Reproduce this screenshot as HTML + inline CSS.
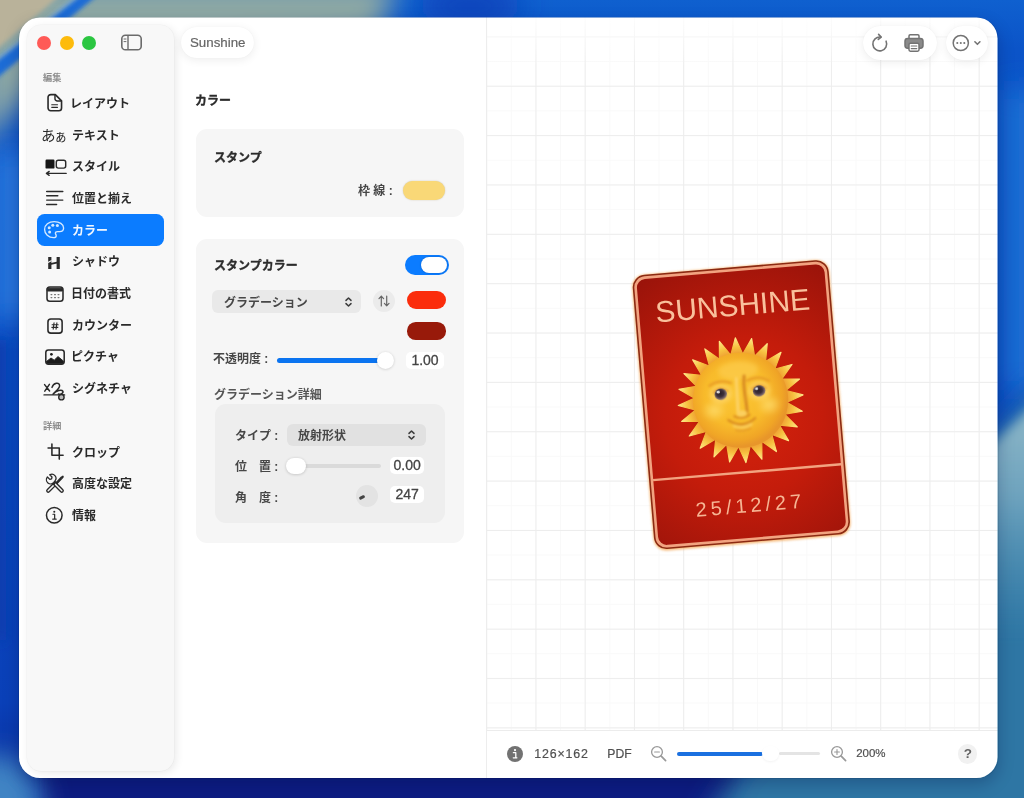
<!DOCTYPE html>
<html lang="ja">
<head>
<meta charset="utf-8">
<title>Sunshine</title>
<style>
*{box-sizing:border-box;margin:0;padding:0}
html,body{width:1024px;height:798px;overflow:hidden;background:#0a4fc4;font-family:"Liberation Sans",sans-serif;color:#2b2b2b}
.abs,.t,svg.i{position:absolute}
svg.t{overflow:visible}
svg.t text{font-family:"Liberation Sans","Noto Sans CJK JP",sans-serif;font-weight:bold}
#wall{position:absolute;left:0;top:0;width:1024px;height:798px}
#winshadow{position:absolute;left:19px;top:17.5px;width:978.5px;height:760.5px;border-radius:21px;box-shadow:0 6px 16px rgba(0,10,60,.26),0 0 0 .5px rgba(0,0,0,.16)}
#win{position:absolute;left:0;top:0;width:1024px;height:798px;clip-path:inset(17.5px 26.5px 20px 19px round 21px);background:#fff;filter:blur(.7px)}
#sidebar{position:absolute;left:26.5px;top:25px;width:147.5px;height:745.5px;border-radius:14px;background:#f8f8f8;box-shadow:0 0 0 .5px rgba(0,0,0,.035),2px 2px 9px rgba(0,0,0,.085)}
.sel{position:absolute;left:36.8px;top:214.2px;width:127.6px;height:31.4px;border-radius:7.5px;background:#0b7cff}
.tl{position:absolute;top:36px;width:14px;height:14px;border-radius:50%}
.lat{position:absolute;white-space:nowrap;line-height:1}
.card{position:absolute;background:#f6f6f6;border-radius:11px}
.pill{position:absolute;background:#fff;border-radius:17px;box-shadow:0 2px 10px rgba(0,0,0,.075),0 0 1px rgba(0,0,0,.06)}
.num{position:absolute;background:#fff;border-radius:5px;font-size:14px;line-height:17px;text-align:center;color:#444;-webkit-text-stroke:.3px #444}
</style>
</head>
<body>
<!-- ===== wallpaper ===== -->
<svg id="wall" viewBox="0 0 1024 798" preserveAspectRatio="none">
<defs>
<filter id="b6" filterUnits="userSpaceOnUse" x="-120" y="-120" width="1264" height="1038"><feGaussianBlur stdDeviation="6"/></filter>
<filter id="b3" filterUnits="userSpaceOnUse" x="-120" y="-120" width="1264" height="1038"><feGaussianBlur stdDeviation="2.2"/></filter>
<filter id="b14" filterUnits="userSpaceOnUse" x="-120" y="-120" width="1264" height="1038"><feGaussianBlur stdDeviation="14"/></filter>
<linearGradient id="wl" x1="0" y1="0" x2="0" y2="1">
<stop offset="0" stop-color="#0f60cf"/><stop offset=".06" stop-color="#0b54c8"/><stop offset=".45" stop-color="#0a4cc2"/><stop offset=".88" stop-color="#0a40b8"/><stop offset="1" stop-color="#0a2a98"/>
</linearGradient>
<linearGradient id="tg" gradientUnits="userSpaceOnUse" x1="0" y1="418" x2="0" y2="640"><stop offset="0" stop-color="#8fb8c8" stop-opacity=".95"/><stop offset=".35" stop-color="#7eaec4" stop-opacity=".8"/><stop offset="1" stop-color="#5a9aba" stop-opacity="0"/></linearGradient>
</defs>
<rect width="1024" height="798" fill="url(#wl)"/>
<ellipse cx="470" cy="6" rx="52" ry="22" fill="#0a44bc" filter="url(#b14)"/>
<!-- right side lighter band -->
<rect x="1004" y="90" width="40" height="300" fill="#1c6fd4" filter="url(#b14)"/>
<!-- left side -->
<rect x="-6" y="150" width="34" height="170" fill="#2b7be0" filter="url(#b14)"/>
<rect x="-14" y="340" width="20" height="300" fill="#0a3cae" filter="url(#b6)"/>
<!-- bottom navy -->
<rect x="40" y="768" width="700" height="50" fill="#0a1d82" filter="url(#b6)"/>
<ellipse cx="-4" cy="806" rx="46" ry="52" fill="#3f84c4" filter="url(#b14)"/>
<!-- bottom-right teal -->
<path d="M700 830 L752 750 L955 750 L955 476 L1050 378 L1060 830Z" fill="#2f76a4" filter="url(#b14)"/>
<path d="M975 461 L1050 389 L1050 660 L975 660Z" fill="url(#tg)" filter="url(#b6)"/>
<!-- top-left beige / teal -->
<path d="M-20 -20 L398 -20 L378 36 L60 60 L-20 150Z" fill="#8da8a4" filter="url(#b14)"/>
<path d="M-20 -20 L78 -20 L-20 64Z" fill="#b9b29a" filter="url(#b3)"/>
<path d="M94 -16 L111 -16 L-20 92 L-20 73Z" fill="#1b6cd6" filter="url(#b3)"/><path d="M93 -16 L-20 73" stroke="#a9cdea" stroke-width="1.6" opacity=".8" filter="url(#b3)"/>
</svg>

<div id="winshadow"></div>
<div id="win">
  <div id="sidebar"></div>
  <div class="sel"></div>
  <div class="tl" style="left:37px;background:#ff5a57"></div>
  <div class="tl" style="left:59.5px;background:#fdbb0c"></div>
  <div class="tl" style="left:82px;background:#2bc641"></div>
  <!-- sidebar toggle icon -->
  <svg class="i" style="left:120px;top:33px" width="23" height="19" viewBox="0 0 23 19" fill="none" stroke="#6b6b6b" stroke-width="1.6"><rect x="1.8" y="2.2" width="19.4" height="14.6" rx="3.6"/><path d="M8 2.4V16.6" stroke-width="1.4"/><path d="M4 6h2M4 8.6h2" stroke-width="1" stroke-linecap="round"/></svg>
  <!-- sidebar labels -->
  <svg class="t" style="left:42.7px;top:72.9px;fill:#8e8e8e" width="18.4" height="9.2" viewBox="0 -8.1 18.4 9.2" role="img" aria-label="編集"><text x="0" y="0" font-size="9.2">編集</text></svg>
  <svg class="t" style="left:70.2px;top:97px;fill:#2a2a2a" width="60" height="12" viewBox="0 -10.56 60 12" role="img" aria-label="レイアウト"><text x="0" y="0" font-size="12">レイアウト</text></svg>
  <svg class="t" style="left:71.5px;top:128.7px;fill:#2a2a2a" width="48" height="12" viewBox="0 -10.56 48 12" role="img" aria-label="テキスト"><text x="0" y="0" font-size="12">テキスト</text></svg>
  <svg class="t" style="left:71.6px;top:160.3px;fill:#2a2a2a" width="48" height="12" viewBox="0 -10.56 48 12" role="img" aria-label="スタイル"><text x="0" y="0" font-size="12">スタイル</text></svg>
  <svg class="t" style="left:72.4px;top:192px;fill:#2a2a2a" width="60" height="12" viewBox="0 -10.56 60 12" role="img" aria-label="位置と揃え"><text x="0" y="0" font-size="12">位置と揃え</text></svg>
  <svg class="t" style="left:71.5px;top:223.9px;fill:#f0f7ff" width="36" height="12" viewBox="0 -10.56 36 12" role="img" aria-label="カラー"><text x="0" y="0" font-size="12">カラー</text></svg>
  <svg class="t" style="left:71.5px;top:255.3px;fill:#2a2a2a" width="48" height="12" viewBox="0 -10.56 48 12" role="img" aria-label="シャドウ"><text x="0" y="0" font-size="12">シャドウ</text></svg>
  <svg class="t" style="left:70.7px;top:287px;fill:#2a2a2a" width="60" height="12" viewBox="0 -10.56 60 12" role="img" aria-label="日付の書式"><text x="0" y="0" font-size="12">日付の書式</text></svg>
  <svg class="t" style="left:71.5px;top:318.7px;fill:#2a2a2a" width="60" height="12" viewBox="0 -10.56 60 12" role="img" aria-label="カウンター"><text x="0" y="0" font-size="12">カウンター</text></svg>
  <svg class="t" style="left:70.6px;top:350.3px;fill:#2a2a2a" width="48" height="12" viewBox="0 -10.56 48 12" role="img" aria-label="ピクチャ"><text x="0" y="0" font-size="12">ピクチャ</text></svg>
  <svg class="t" style="left:71.5px;top:382px;fill:#2a2a2a" width="60" height="12" viewBox="0 -10.56 60 12" role="img" aria-label="シグネチャ"><text x="0" y="0" font-size="12">シグネチャ</text></svg>
  <svg class="t" style="left:42.5px;top:420.9px;fill:#8e8e8e" width="18.4" height="9.2" viewBox="0 -8.1 18.4 9.2" role="img" aria-label="詳細"><text x="0" y="0" font-size="9.2">詳細</text></svg>
  <svg class="t" style="left:71.7px;top:445.5px;fill:#2a2a2a" width="48" height="12" viewBox="0 -10.56 48 12" role="img" aria-label="クロップ"><text x="0" y="0" font-size="12">クロップ</text></svg>
  <svg class="t" style="left:71.8px;top:477.3px;fill:#2a2a2a" width="60" height="12" viewBox="0 -10.56 60 12" role="img" aria-label="高度な設定"><text x="0" y="0" font-size="12">高度な設定</text></svg>
  <svg class="t" style="left:72.3px;top:509px;fill:#2a2a2a" width="24" height="12" viewBox="0 -10.56 24 12" role="img" aria-label="情報"><text x="0" y="0" font-size="12">情報</text></svg>

  <!-- sidebar icons -->
  <svg class="i" style="left:44.20px;top:91.80px" width="21.60" height="21.60" viewBox="0 0 24 24" fill="none" stroke="#2a2a2a" stroke-width="1.55" stroke-linecap="round" stroke-linejoin="round"><path d="M7.3 2.9H12.6L19.5 9.8V17.8A3 3 0 0 1 16.5 20.8H7.5A3 3 0 0 1 4.5 17.8V5.9A3 3 0 0 1 7.5 2.9Z" stroke-width="1.8"/><path d="M12.2 3.2V7.4A2.6 2.6 0 0 0 14.8 10H19.2" stroke-width="1.6"/><path d="M8.6 14.2H15M8.6 17H15" stroke-width="1.3"/></svg>
  <svg class="t" style="left:41.4px;top:127.5px;fill:#2a2a2a" width="14.6" height="14.6" viewBox="0 -12.85 14.6 14.6" role="img" aria-label="あ"><text x="0" y="0" font-size="14.6" style="font-weight:normal">あ</text></svg>
  <svg class="t" style="left:54.1px;top:128.9px;fill:#2a2a2a" width="13.4" height="13.4" viewBox="0 -11.79 13.4 13.4" role="img" aria-label="ぁ"><text x="0" y="0" font-size="13.4" style="font-weight:normal">ぁ</text></svg>
  <svg class="i" style="left:43.5px;top:154.6px" width="24" height="24" viewBox="0 0 24 24" fill="none" stroke="#2a2a2a" stroke-width="1.55" stroke-linecap="round" stroke-linejoin="round"><rect x="1.5" y="4.6" width="9" height="9" rx="1.2" fill="#161616" stroke="none"/><rect x="12.3" y="5.3" width="9.4" height="7.8" rx="2" stroke-width="1.45"/><path d="M2.4 18.4H22.2M5.2 16.4L2.4 18.4L5.2 20.4" stroke-width="1.3"/></svg>
  <svg class="i" style="left:43px;top:186.3px" width="24" height="24" viewBox="0 0 24 24" fill="none" stroke="#2a2a2a" stroke-width="1.55" stroke-linecap="round" stroke-linejoin="round"><path d="M3.7 5.5H19.8M3.7 9.8H14.8M3.7 14.1H19.8M3.7 18.4H13.6" stroke-width="1.45"/></svg>
  <svg class="i" style="left:41.7px;top:217.8px" width="24" height="24" viewBox="0 0 24 24" fill="none" stroke="#2a2a2a" stroke-width="1.55" stroke-linecap="round" stroke-linejoin="round"><path d="M12.2 3.6C6.8 3.6 2.6 7 2.6 11.4C2.6 16 6.6 19.6 11.6 19.6C13.4 19.6 14.2 18.7 14.2 17.7C14.2 16.6 13.4 16.2 13.4 15.2C13.4 14.2 14.3 13.6 15.6 13.6H17.6C20 13.6 21.6 12.2 21.6 10C21.6 6.2 17.4 3.6 12.2 3.6Z" stroke="#d4e9ff" stroke-width="1.35"/><g fill="#d4e9ff" stroke="none"><circle cx="7.2" cy="9.8" r="1.5"/><circle cx="10.8" cy="7.2" r="1.5"/><circle cx="15.4" cy="7.6" r="1.5"/><circle cx="7.6" cy="14" r="1.5"/></g></svg>
  <svg class="i" style="left:42.30px;top:251.00px" width="24.00" height="24.00" viewBox="0 0 24 24" fill="none" stroke="#2a2a2a" stroke-width="1.55" stroke-linecap="round" stroke-linejoin="round"><path d="M7.8 6V18M16.2 6V18" stroke-width="3.2" stroke-linecap="butt"/><path d="M8 13.2L16 11.4" stroke-width="1.7" stroke-linecap="butt"/><path d="M6 11.4L9.6 9.6" stroke="#f8f8f8" stroke-width="1.1" stroke-linecap="butt"/></svg>
  <svg class="i" style="left:42.6px;top:281.6px" width="24" height="24" viewBox="0 0 24 24" fill="none" stroke="#2a2a2a" stroke-width="1.55" stroke-linecap="round" stroke-linejoin="round"><rect x="4" y="5" width="16" height="14.2" rx="2.8"/><path d="M4.6 6.2H19.4V9H4.6Z" fill="#2a2a2a" stroke-width="1"/><g stroke="#777" stroke-width="1.1"><path d="M8 12.6H8.9M11.5 12.6H12.5M15 12.6H16M8 15.6H8.9M11.5 15.6H12.5M15 15.6H16"/></g></svg>
  <svg class="i" style="left:43.66px;top:314.76px" width="22.08" height="22.08" viewBox="0 0 24 24" fill="none" stroke="#2a2a2a" stroke-width="1.55" stroke-linecap="round" stroke-linejoin="round"><rect x="4.3" y="4.3" width="15.4" height="15.4" rx="3.2" stroke-width="1.7"/><path d="M10.9 8.6L10 15.4M14 8.6L13.1 15.4M8.8 10.6H15.4M8.5 13.4H15.1" stroke-width="1.2"/></svg>
  <svg class="i" style="left:42.5px;top:344.8px" width="24" height="24" viewBox="0 0 24 24" fill="none" stroke="#2a2a2a" stroke-width="1.55" stroke-linecap="round" stroke-linejoin="round"><rect x="2.8" y="4.9" width="18.4" height="14.2" rx="2.6"/><path d="M3.4 16.6L8 13L11.2 15.2L15 11.6L20.6 16.2V17A1.6 1.6 0 0 1 19 18.6H5A1.6 1.6 0 0 1 3.4 17Z" fill="#1c1c1c" stroke-width="1"/><circle cx="8.4" cy="9.3" r="1.35" fill="#1c1c1c" stroke="none"/></svg>
  <svg class="i" style="left:43px;top:377.6px" width="24" height="24" viewBox="0 0 24 24" fill="none" stroke="#2a2a2a" stroke-width="1.55" stroke-linecap="round" stroke-linejoin="round"><path d="M1.6 6.6L6.6 13M6.4 6.4L1.8 13.2" stroke-width="1.5"/><path d="M9 9.4C10.4 4.6 16.6 3.6 16.6 7.8C16.6 11 12 13.4 10 16.2C13.4 12.6 18.6 11 19.8 13.2C20.8 15.2 17.4 16.6 15.4 16" stroke-width="1.5"/><path d="M1 16.9H21.6" stroke-width="1.4"/><circle cx="18.4" cy="19.2" r="2.7" stroke-width="1.4" fill="#bdbdbd"/></svg>
  <svg class="i" style="left:45.70px;top:442.40px" width="19.20" height="19.20" viewBox="0 0 24 24" fill="none" stroke="#2a2a2a" stroke-width="1.55" stroke-linecap="round" stroke-linejoin="round"><path d="M7.4 2.6V16.6H21.4M2.6 7.4H16.6V21.4" stroke-width="1.95"/></svg>
  <svg class="i" style="left:43.00px;top:471.80px" width="24.00" height="24.00" viewBox="0 0 24 24" fill="none" stroke="#2a2a2a" stroke-width="1.55" stroke-linecap="round" stroke-linejoin="round"><g><path d="M5.2 18.8L12.4 11.6" stroke-width="4.2"/><path d="M5.2 18.8L12.4 11.6" stroke="#f7f7f7" stroke-width="1.5"/><path d="M13 11L18.2 5.2L19.8 4.2L20.2 4.8L19 6.4L13.8 11.8" stroke-width="1.3"/><path d="M18.8 18.8L11.4 11.2" stroke-width="4.2"/><path d="M18.8 18.8L12.6 12.4" stroke="#f7f7f7" stroke-width="1.5"/><path d="M10.8 10.4A4.1 4.1 0 0 1 4.4 5L6.8 7.4L8.6 6.8L9 5L6.7 2.8A4.1 4.1 0 0 1 12 8.9Z" stroke-width="1.3" fill="#f7f7f7"/></g></svg>
  <svg class="i" style="left:43.02px;top:503.72px" width="22.56" height="22.56" viewBox="0 0 24 24" fill="none" stroke="#2a2a2a" stroke-width="1.55" stroke-linecap="round" stroke-linejoin="round"><circle cx="12" cy="12" r="8.3" stroke-width="1.6"/><circle cx="12" cy="8.2" r="1.1" fill="#2a2a2a" stroke="none"/><path d="M10.6 10.9H12.4V16M10.4 16.1H14" stroke-width="1.3"/></svg>

  <!-- title pill -->
  <div class="pill" style="left:180.5px;top:27px;width:73px;height:31px;border-radius:16px"></div>
  <div class="lat" style="left:190px;top:36.4px;font-size:13.3px;color:#666;-webkit-text-stroke:.2px #666">Sunshine</div>

  <!-- ===== inspector ===== -->
  <svg class="t" style="left:194.8px;top:93.8px;fill:#2c2c2c;stroke:#2c2c2c;stroke-width:0.35px;stroke-linejoin:round" width="36" height="12" viewBox="0 -10.56 36 12" role="img" aria-label="カラー"><text x="0" y="0" font-size="12">カラー</text></svg>
  <div class="card" style="left:196px;top:129px;width:267.8px;height:88px"></div>
  <svg class="t" style="left:213.9px;top:151.2px;fill:#2c2c2c;stroke:#2c2c2c;stroke-width:0.35px;stroke-linejoin:round" width="48" height="12" viewBox="0 -10.56 48 12" role="img" aria-label="スタンプ"><text x="0" y="0" font-size="12">スタンプ</text></svg>
  <svg class="t" style="left:357.5px;top:183.6px;fill:#474747" width="36.3" height="12" viewBox="0 -10.56 36.3 12" role="img" aria-label="枠 線 :"><text x="0" y="0" font-size="12">枠 線 :</text></svg>
  <div class="abs" style="left:402.5px;top:180.5px;width:42.5px;height:19px;border-radius:9.5px;background:#f9d877;box-shadow:0 0 1.5px rgba(120,90,0,.35)"></div>

  <div class="card" style="left:196px;top:238.5px;width:267.8px;height:304.2px"></div>
  <svg class="t" style="left:213.9px;top:259px;fill:#2c2c2c;stroke:#2c2c2c;stroke-width:0.35px;stroke-linejoin:round" width="84" height="12" viewBox="0 -10.56 84 12" role="img" aria-label="スタンプカラー"><text x="0" y="0" font-size="12">スタンプカラー</text></svg>
  <!-- toggle -->
  <div class="abs" style="left:404.5px;top:254.5px;width:44px;height:20.5px;border-radius:10.5px;background:#0b7cff"></div>
  <div class="abs" style="left:420.5px;top:256.8px;width:26px;height:16px;border-radius:8px;background:#fff;box-shadow:0 0 2px rgba(0,0,0,.25)"></div>
  <!-- popup 1 -->
  <div class="abs" style="left:211.7px;top:290px;width:149.6px;height:23px;border-radius:6px;background:#e9e9e9"></div>
  <svg class="t" style="left:223.9px;top:295.6px;fill:#474747" width="84" height="12" viewBox="0 -10.56 84 12" role="img" aria-label="グラデーション"><text x="0" y="0" font-size="12">グラデーション</text></svg>
  <svg class="i" style="left:343.5px;top:295.5px" width="9" height="12" viewBox="0 0 9 12" fill="none" stroke="#3c3c3c" stroke-width="1.5" stroke-linecap="round" stroke-linejoin="round"><path d="M2 4.4L4.5 2L7 4.4M2 7.6L4.5 10L7 7.6"/></svg>
  <!-- swap button -->
  <div class="abs" style="left:373.3px;top:289.7px;width:22px;height:22px;border-radius:11px;background:#ebebeb"></div>
  <svg class="i" style="left:377.3px;top:293.7px" width="14" height="14" viewBox="0 0 14 14" fill="none" stroke="#666" stroke-width="1.2" stroke-linecap="round" stroke-linejoin="round"><path d="M4.3 12V2.2M2 4.6L4.3 2.2L6.6 4.6M9.7 2V11.8M7.4 9.4L9.7 11.8L12 9.4"/></svg>
  <div class="abs" style="left:406.7px;top:291px;width:39px;height:18.2px;border-radius:9.1px;background:#fb2d0c"></div>
  <div class="abs" style="left:406.7px;top:322.2px;width:39px;height:17.4px;border-radius:8.7px;background:#981a0a"></div>
  <svg class="t" style="left:213.4px;top:352.4px;fill:#474747" width="56.1" height="12" viewBox="0 -10.56 56.1 12" role="img" aria-label="不透明度 :"><text x="0" y="0" font-size="12">不透明度 :</text></svg>
  <!-- slider 1 -->
  <div class="abs" style="left:276.5px;top:358px;width:104px;height:5px;border-radius:2.5px;background:#0b74f0"></div>
  <div class="abs" style="left:376.8px;top:351.8px;width:17.6px;height:17.4px;border-radius:8.7px;background:#fff;box-shadow:0 .5px 3px rgba(0,0,0,.18)"></div>
  <div class="num" style="left:406px;top:352px;width:38px;height:17px">1.00</div>
  <svg class="t" style="left:214.3px;top:388px;fill:#555555" width="108" height="12" viewBox="0 -10.56 108 12" role="img" aria-label="グラデーション詳細"><text x="0" y="0" font-size="12">グラデーション詳細</text></svg>

  <div class="abs" style="left:214.8px;top:403.6px;width:230px;height:119.8px;border-radius:11px;background:#eeeeee"></div>
  <svg class="t" style="left:235.3px;top:429.4px;fill:#474747" width="44.1" height="12" viewBox="0 -10.56 44.1 12" role="img" aria-label="タイプ :"><text x="0" y="0" font-size="12">タイプ :</text></svg>
  <div class="abs" style="left:287.4px;top:424px;width:138.4px;height:22px;border-radius:6px;background:#e1e1e1"></div>
  <svg class="t" style="left:298.4px;top:429.2px;fill:#474747" width="48" height="12" viewBox="0 -10.56 48 12" role="img" aria-label="放射形状"><text x="0" y="0" font-size="12">放射形状</text></svg>
  <svg class="i" style="left:407px;top:429.2px" width="9" height="12" viewBox="0 0 9 12" fill="none" stroke="#3c3c3c" stroke-width="1.5" stroke-linecap="round" stroke-linejoin="round"><path d="M2 4.4L4.5 2L7 4.4M2 7.6L4.5 10L7 7.6"/></svg>
  <svg class="t" style="left:235.1px;top:460.3px;fill:#474747" width="44.1" height="12" viewBox="0 -10.56 44.1 12" role="img" aria-label="位　置 :"><text x="0" y="0" font-size="12">位　置 :</text></svg>
  <div class="abs" style="left:300px;top:463.7px;width:81.3px;height:4px;border-radius:2px;background:#dadada"></div>
  <div class="abs" style="left:285.6px;top:457.5px;width:20.6px;height:16.4px;border-radius:8.2px;background:#fff;box-shadow:0 .5px 3px rgba(0,0,0,.2)"></div>
  <div class="num" style="left:390px;top:457px;width:34.4px;height:17.2px">0.00</div>
  <svg class="t" style="left:234.9px;top:490.6px;fill:#474747" width="44.1" height="12" viewBox="0 -10.56 44.1 12" role="img" aria-label="角　度 :"><text x="0" y="0" font-size="12">角　度 :</text></svg>
  <div class="abs" style="left:356.3px;top:484.8px;width:22px;height:22px;border-radius:11px;background:#e3e3e3"></div>
  <div class="abs" style="left:358.8px;top:496.3px;width:5.6px;height:2.8px;border-radius:1.4px;background:#444;transform:rotate(-25deg)"></div>
  <div class="num" style="left:390px;top:486px;width:34.4px;height:17.2px">247</div>

  <!-- ===== canvas ===== -->
  <div id="canvas" class="abs" style="left:486px;top:17px;width:512px;height:713.5px;border-bottom:1px solid #ececec;
    background-color:#fff;
    background-image:linear-gradient(to bottom,rgba(255,255,255,.85) 0,rgba(255,255,255,.5) 22px,rgba(255,255,255,0) 50px),linear-gradient(to right,#ededed 1px,transparent 1px),linear-gradient(to bottom,#ededed 1px,transparent 1px),linear-gradient(to right,#f9f9f9 1px,transparent 1px),linear-gradient(to bottom,#f9f9f9 1px,transparent 1px);
    background-size:100% 100%,49.25px 49.36px,49.25px 49.36px,24.625px 24.68px,24.625px 24.68px;
    background-position:0 0,.2px 19.4px,.2px 19.4px,.2px 19.4px,.2px 19.4px"></div>

  <div class="abs" style="left:485.6px;top:17px;width:1px;height:761px;background:#ededed"></div>
  <!-- toolbar right -->
  <div class="pill" style="left:863px;top:26px;width:74px;height:34px"></div>
  <div class="pill" style="left:946px;top:26px;width:42px;height:34px"></div>
  <svg class="i" style="left:869px;top:32px" width="22" height="22" viewBox="0 0 22 22" fill="none" stroke="#737373" stroke-width="1.6" stroke-linecap="round" stroke-linejoin="round"><path d="M11.6 5.1A6.9 6.9 0 1 0 17.1 9.2"/><path d="M9.6 2.4L12.2 5.1L9.3 7.4"/></svg>
  <svg class="i" style="left:903px;top:32px" width="22" height="22" viewBox="0 0 22 22" fill="none" stroke="#737373" stroke-width="1.5" stroke-linejoin="round"><rect x="6" y="2.8" width="10" height="4.4" rx="1.2"/><rect x="2" y="6.6" width="18" height="9.6" rx="2.6" fill="#8a8a8a"/><rect x="6" y="11.2" width="10" height="8" rx="1.4" fill="#fff"/><path d="M8.2 14h5.6M8.2 16.6h5.6" stroke-width="1.1" stroke-linecap="round"/></svg>
  <svg class="i" style="left:950px;top:32px" width="36" height="22" viewBox="0 0 36 22" fill="none" stroke="#737373" stroke-width="1.5" stroke-linecap="round" stroke-linejoin="round"><circle cx="10.8" cy="11" r="7.6"/><g fill="#737373" stroke="none"><circle cx="7.3" cy="11" r="1.05"/><circle cx="10.8" cy="11" r="1.05"/><circle cx="14.3" cy="11" r="1.05"/></g><path d="M24.9 9.8L27.4 12.3L29.9 9.8" stroke-width="1.6"/></svg>

  <!-- bottom bar -->
  <svg class="i" style="left:506px;top:744.7px" width="18" height="18" viewBox="0 0 18 18"><circle cx="9" cy="9" r="8" fill="#727272"/><circle cx="9" cy="5.1" r="1.15" fill="#fff"/><path d="M7.4 7.7h2.4v5M7.3 12.8h3.6" stroke="#fff" stroke-width="1.3" fill="none" stroke-linecap="round" stroke-linejoin="round"/></svg>
  <div class="lat" style="left:534.3px;top:747.8px;font-size:12.4px;letter-spacing:.85px;color:#505050;-webkit-text-stroke:.2px #505050">126×162</div>
  <div class="lat" style="left:607.3px;top:747.8px;font-size:12.2px;color:#505050;-webkit-text-stroke:.2px #505050">PDF</div>
  <svg class="i" style="left:648.5px;top:744px" width="20" height="20" viewBox="0 0 20 20" fill="none" stroke="#999" stroke-width="1.3" stroke-linecap="round"><circle cx="8" cy="8" r="5.4"/><path d="M12.2 12.2L16.6 16.6" stroke-width="1.7"/><path d="M5.6 8h4.8" stroke-width="1.1"/></svg>
  <div class="abs" style="left:676.5px;top:751.5px;width:86px;height:4px;border-radius:2px;background:#1a70e0"></div>
  <div class="abs" style="left:778.5px;top:752px;width:41.5px;height:3px;border-radius:1.5px;background:#e4e4e4"></div>
  <div class="abs" style="left:761.5px;top:746px;width:17.5px;height:15px;border-radius:7.5px;background:#fff;box-shadow:0 1px 2.5px rgba(0,0,0,.05)"></div>
  <svg class="i" style="left:828.9px;top:744px" width="20" height="20" viewBox="0 0 20 20" fill="none" stroke="#999" stroke-width="1.3" stroke-linecap="round"><circle cx="8" cy="8" r="5.4"/><path d="M12.2 12.2L16.6 16.6" stroke-width="1.7"/><path d="M5.6 8h4.8M8 5.6v4.8" stroke-width="1.1"/></svg>
  <div class="lat" style="left:856.2px;top:748.3px;font-size:11.5px;color:#505050;-webkit-text-stroke:.2px #505050">200%</div>
  <div class="abs" style="left:958px;top:744.2px;width:19.4px;height:19.4px;border-radius:10px;background:#f1f1f1"></div>
  <div class="lat" style="left:963.7px;top:747px;font-size:13.5px;font-weight:bold;color:#626262">?</div>

  <!-- ===== stamp ===== -->
  <svg id="stamp" class="i" style="left:643.45px;top:267.05px;transform:rotate(-4.85deg);overflow:visible" width="196.7" height="275.3" viewBox="0 0 196.7 275.3" role="img" aria-label="SUNSHINE 25/12/27">
<defs>
<radialGradient id="sg" gradientUnits="userSpaceOnUse" cx="100" cy="150" r="175"><stop offset="0" stop-color="#d6230d"/><stop offset=".45" stop-color="#c41c0b"/><stop offset="1" stop-color="#98130a"/></radialGradient>
<radialGradient id="rg" gradientUnits="userSpaceOnUse" cx="98.0" cy="133.2" r="63.2"><stop offset=".72" stop-color="#ee9a30"/><stop offset=".84" stop-color="#f7c140"/><stop offset="1" stop-color="#ffeb8c"/></radialGradient>
<radialGradient id="dg" gradientUnits="userSpaceOnUse" cx="94.0" cy="127.19999999999999" r="52"><stop offset="0" stop-color="#fbc634"/><stop offset=".6" stop-color="#f8bb2b"/><stop offset=".88" stop-color="#f0a526"/><stop offset="1" stop-color="#e8962a"/></radialGradient>
<radialGradient id="ck"><stop offset="0" stop-color="#fedc6c" stop-opacity=".85"/><stop offset="1" stop-color="#fedc6c" stop-opacity="0"/></radialGradient>
<radialGradient id="eye" cx=".45" cy=".42" r=".6"><stop offset="0" stop-color="#2a2029"/><stop offset=".5" stop-color="#3e303a"/><stop offset=".8" stop-color="#75626a"/><stop offset="1" stop-color="#c9a468"/></radialGradient>
<filter id="sb1" x="-30%" y="-30%" width="160%" height="160%"><feGaussianBlur stdDeviation="1.1"/></filter>
<filter id="sb2" x="-30%" y="-30%" width="160%" height="160%"><feGaussianBlur stdDeviation="2.2"/></filter>
<filter id="sb0" x="-30%" y="-30%" width="160%" height="160%"><feGaussianBlur stdDeviation=".55"/></filter>
</defs>
<rect x="-.6" y="-.2" width="197.89999999999998" height="276.90000000000003" rx="13" fill="#f3a24e" opacity=".75" filter="url(#sb1)"/>
<rect x="0" y="0" width="196.7" height="275.3" rx="12.5" fill="#8c2a12"/>
<rect x="1.6" y="1.6" width="193.5" height="272.1" rx="11" fill="#f2a380"/>
<rect x="4.2" y="4.2" width="188.29999999999998" height="266.90000000000003" rx="8.6" fill="url(#sg)"/>
<path d="M4 205.4H192.7" stroke="#f2a380" stroke-width="2.5"/>
<text x="98" y="48.5" text-anchor="middle" font-size="30" fill="#f9c09c" style="font-family:'Liberation Sans',sans-serif">SUNSHINE</text>
<text x="44" y="245.5" font-size="20" letter-spacing="4" fill="#f6b594" style="font-family:'Liberation Sans',sans-serif">25/12/27</text>
<!-- sun -->
<g>
<circle cx="98.0" cy="134.2" r="50" fill="#7a1206" opacity=".35" filter="url(#sb2)"/>
<path d="M92.1 87.1L98 70.6L103.9 87.1ZM104.2 87.1L114.2 72.7L115.6 90.2ZM115.9 90.3L129.3 79L126.2 96.2ZM126.4 96.4L142.3 88.9L134.8 104.8ZM135 105L152.2 101.9L140.9 115.3ZM141 115.6L158.5 117L144.1 127ZM144.1 127.3L160.6 133.2L144.1 139.1ZM144.1 139.4L158.5 149.4L141 150.8ZM140.9 151.1L152.2 164.5L135 161.4ZM134.8 161.6L142.3 177.5L126.4 170ZM126.2 170.2L129.3 187.4L115.9 176.1ZM115.6 176.2L114.2 193.7L104.2 179.3ZM103.9 179.3L98 195.8L92.1 179.3ZM91.8 179.3L81.8 193.7L80.4 176.2ZM80.1 176.1L66.7 187.4L69.8 170.2ZM69.6 170L53.7 177.5L61.2 161.6ZM61 161.4L43.8 164.5L55.1 151.1ZM55 150.8L37.5 149.4L51.9 139.4ZM51.9 139.1L35.4 133.2L51.9 127.3ZM51.9 127L37.5 117L55 115.6ZM55.1 115.3L43.8 101.9L61 105ZM61.2 104.8L53.7 88.9L69.6 96.4ZM69.8 96.2L66.7 79L80.1 90.3ZM80.4 90.2L81.8 72.7L91.8 87.1Z" fill="url(#rg)" stroke="url(#rg)" stroke-width="1.2" stroke-linejoin="round"/>
<circle cx="98.0" cy="133.2" r="47.6" fill="url(#dg)"/>
<g filter="url(#sb2)">
<ellipse cx="71.0" cy="141.2" rx="13" ry="11" fill="url(#ck)"/>
<ellipse cx="126.0" cy="140.2" rx="13" ry="11" fill="url(#ck)"/>
<ellipse cx="79.0" cy="125.19999999999999" rx="11" ry="9.5" fill="#fdd568" opacity=".75"/>
<ellipse cx="117.5" cy="125.19999999999999" rx="11" ry="9.5" fill="#fdd568" opacity=".75"/>
<ellipse cx="98.0" cy="103.19999999999999" rx="20" ry="9" fill="#fdd056" opacity=".55"/>
</g>
<g filter="url(#sb1)" fill="none" stroke-linecap="round">
<path d="M68.0 116.19999999999999Q78.0 110.19999999999999 90.0 115.19999999999999" stroke="#e89c28" stroke-width="2.2"/>
<path d="M106.0 114.19999999999999Q118.0 109.19999999999999 128.0 116.19999999999999" stroke="#e89c28" stroke-width="2.2"/>
<path d="M103.5 109.19999999999999C101.0 121.19999999999999 104.0 135.2 103.5 145.2" stroke="#d88a22" stroke-width="3"/>
<path d="M95.5 111.19999999999999C95.0 123.19999999999999 95.0 135.2 94.5 144.2" stroke="#fdd265" stroke-width="3.2"/>
<path d="M90.5 148.7Q98.0 152.7 105.5 148.39999999999998" stroke="#dc8e22" stroke-width="2.4"/>
<path d="M84.0 151.79999999999998Q97.5 162.7 111.2 152.2" stroke="#d88a20" stroke-width="2.2"/>
<path d="M91.0 162.79999999999998Q98.0 165.2 105.5 162.2" stroke="#e79d28" stroke-width="1.8"/>
<path d="M89.0 158.39999999999998Q98.0 162.6 107.0 158.2" stroke="#fcd264" stroke-width="2"/>
</g>
<g filter="url(#sb1)" fill="none" stroke-linecap="round">
<ellipse cx="98.0" cy="146.39999999999998" rx="5.2" ry="3.2" fill="#fcd36a" stroke="none" opacity=".8"/>
<path d="M71.5 123.69999999999999Q78.5 116.39999999999999 86.0 123.19999999999999" stroke="#e39526" stroke-width="1.6"/>
<path d="M110.0 122.99999999999999Q117.5 116.19999999999999 124.5 123.6" stroke="#e39526" stroke-width="1.6"/>
</g>
<g filter="url(#sb0)">
<ellipse cx="78.8" cy="125.6" rx="6.3" ry="5.8" fill="url(#eye)"/>
<ellipse cx="117.3" cy="125.49999999999999" rx="6.3" ry="5.8" fill="url(#eye)"/>
<ellipse cx="76.4" cy="123.19999999999999" rx="1.5" ry="1.35" fill="#fff" opacity=".85"/>
<ellipse cx="114.8" cy="122.99999999999999" rx="1.5" ry="1.35" fill="#fff" opacity=".85"/>
</g>
</g>
</svg>
</div>
</body>
</html>
